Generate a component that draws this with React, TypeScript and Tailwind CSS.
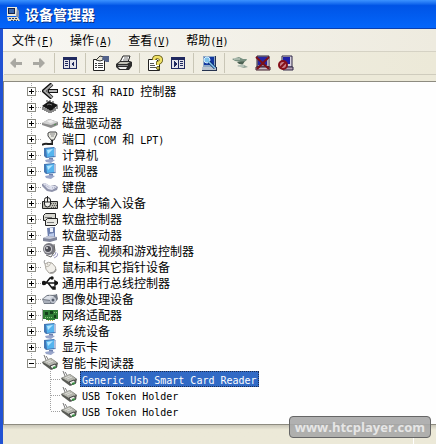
import React, { useState } from 'react';

type IconName =
  | 'scsi' | 'chip' | 'disk' | 'port' | 'computer' | 'keyboard' | 'hid'
  | 'floppyController' | 'floppyDrive' | 'sound' | 'mouse' | 'usb'
  | 'imaging' | 'network' | 'cardReader';

type DeviceNode = {
  label: string;
  icon: IconName;
  children?: string[];
};

const devices: DeviceNode[] = [
  { label: 'SCSI 和 RAID 控制器', icon: 'scsi' },
  { label: '处理器', icon: 'chip' },
  { label: '磁盘驱动器', icon: 'disk' },
  { label: '端口 (COM 和 LPT)', icon: 'port' },
  { label: '计算机', icon: 'computer' },
  { label: '监视器', icon: 'computer' },
  { label: '键盘', icon: 'keyboard' },
  { label: '人体学输入设备', icon: 'hid' },
  { label: '软盘控制器', icon: 'floppyController' },
  { label: '软盘驱动器', icon: 'floppyDrive' },
  { label: '声音、视频和游戏控制器', icon: 'sound' },
  { label: '鼠标和其它指针设备', icon: 'mouse' },
  { label: '通用串行总线控制器', icon: 'usb' },
  { label: '图像处理设备', icon: 'imaging' },
  { label: '网络适配器', icon: 'network' },
  { label: '系统设备', icon: 'computer' },
  { label: '显示卡', icon: 'computer' },
  {
    label: '智能卡阅读器',
    icon: 'cardReader',
    children: ['Generic Usb Smart Card Reader', 'USB Token Holder', 'USB Token Holder'],
  },
];

const menus = [
  { label: '文件', accel: 'F' },
  { label: '操作', accel: 'A' },
  { label: '查看', accel: 'V' },
  { label: '帮助', accel: 'H' },
];

const deviceIcons: Record<IconName, React.ReactNode> = {
  scsi: (
    <g fill="none">
      <path d="M10 1 L2 8 L10 15" stroke="#111" strokeWidth="4" />
      <path d="M6 8 H16" stroke="#111" strokeWidth="4" />
      <path d="M10 1.5 L2.5 8 L10 14.5" stroke="#a8a8a8" strokeWidth="2" />
      <path d="M7 8 H15" stroke="#b5b5b5" strokeWidth="2" />
    </g>
  ),
  chip: (
    <g>
      <path d="M0 7 L7 2 L16 6 L9 12 Z" fill="#161616" />
      <path d="M1 8v3M3 9v3M5 10v3M7 11v3M9 12v2M11 10v3M13 9v3M15 7v3" stroke="#161616" />
      <path d="M5 3V1M8 3V1M11 4V2" stroke="#333" />
      <path d="M5 6 L7 5 L10 6" stroke="#777" fill="none" />
    </g>
  ),
  disk: (
    <g>
      <path d="M0 8 L7 4 L16 7 L16 10 L9 13 L0 10 Z" fill="#8b8b8b" />
      <path d="M0 8 L7 4 L16 7 L9 10 Z" fill="#d2d2d2" />
      <path d="M5 6 L9 5 L12 7 L8 8 Z" fill="#eee" />
      <path d="M12 10 L14 9" stroke="#4d8a4d" />
    </g>
  ),
  port: (
    <g>
      <path d="M6 2 L8 1 L14 1 L15 3 L12 9 L9 9 L6 5 Z" fill="#e6e6de" stroke="#444" />
      <path d="M8 3 H13 M9 5 H12" stroke="#888" />
      <path d="M10 9 V13 H6 Q3 12 0 14" fill="none" stroke="#222" strokeWidth="2" />
      <path d="M9 10 V12" stroke="#bbb" />
    </g>
  ),
  computer: (
    <g>
      <path d="M2 1 L12 0 L14 2 L14 10 L4 11 L2 9 Z" fill="#4377b4" />
      <path d="M4 2 L12 1 L12 9 L5 10 Z" fill="#55b4ee" />
      <path d="M5 3 L11 2 L6 7 Z" fill="#b5e7ff" />
      <path d="M12 1 L14 2 L14 10 L12 9 Z" fill="#b4c1dd" />
      <path d="M7 11 H11 V13 H7 Z" fill="#6f80ad" />
      <path d="M3 13 L8 12 L13 13 L9 16 L4 15 Z" fill="#98a5ca" />
    </g>
  ),
  keyboard: (
    <g>
      <path d="M0 5 L3 4 L8 7 L13 6 L16 8 L15 11 L10 13 L5 12 L0 7 Z" fill="#8f93ab" />
      <path d="M1 5 L3 4 L8 7 L13 7 L15 8 L10 11 L6 10 Z" fill="#dfe1ee" />
      <path d="M3 6 L8 9 M10 9 L14 8" stroke="#a7abc2" strokeDasharray="1 1" />
    </g>
  ),
  hid: (
    <g>
      <path d="M0.500 6.500 H15.500 V13.500 H0.500 Z" fill="#b9b9b0" stroke="#222" />
      <path d="M9 8.500 H15 M10 10.500 H15 M9 12.500 H15" stroke="#555" strokeDasharray="1 1" />
      <path d="M2.500 4.500 Q2.500 2.500 5 2.500 Q8.500 2.500 8.500 5 V9 Q8.500 12 5.500 12 Q2.500 12 2.500 9 Z" fill="#f2f2ee" stroke="#222" />
      <path d="M5.500 1 V7 M3 7 H8" stroke="#222" />
    </g>
  ),
  floppyController: (
    <g stroke="#222">
      <path d="M1.500 4.500 L3.500 2.500 H13.500 V7.500 L11.500 9.500 H1.500 Z" fill="#d6d6cf" />
      <path d="M3.500 9.500 L5.500 7.500 H15.500 V12.500 L13.500 14.500 H3.500 Z" fill="#e8e8e2" />
      <path d="M3 6.500 H10 M5 11.500 H12" stroke="#777" />
    </g>
  ),
  floppyDrive: (
    <g>
      <path d="M5 1 L13 0 V10 L6 11 Z" fill="#6d7fae" />
      <path d="M8 1 L11 1 V5 L8 5 Z" fill="#e9eefb" />
      <path d="M7 7 L12 6 V10 L7 11 Z" fill="#b8c9ea" />
      <path d="M1 11 L6 9 L15 10 L15 13 L8 15 L1 14 Z" fill="#7f8499" />
      <path d="M1 11 L6 9 L15 10 L8 12 Z" fill="#c6cad9" />
    </g>
  ),
  sound: (
    <g>
      <circle cx="7" cy="6" r="6" fill="#77777f" />
      <circle cx="6" cy="6" r="4" fill="#c9c9ce" />
      <circle cx="6" cy="6" r="3" fill="#4b4b54" />
      <circle cx="5" cy="5" r="1" fill="#ddd" />
      <path d="M12 1 L13 8 L9 14 L4 12" fill="none" stroke="#666" />
      <path d="M11 13 Q14 12 14 9 M12 15 Q16 14 16 10" fill="none" stroke="#9a9ac0" />
    </g>
  ),
  mouse: (
    <g>
      <path d="M3 1 Q1 3 3 5" fill="none" stroke="#999" />
      <path d="M3 5 Q6 2 10 4 Q15 8 14 12 Q11 16 7 14 Q3 11 3 5 Z" fill="#f1efea" stroke="#aaa69f" />
      <path d="M3 8 Q8 8 9 4 M6 6 L5 4" fill="none" stroke="#bbb7ae" />
      <path d="M8 14 Q13 14 14 10" fill="none" stroke="#888" />
    </g>
  ),
  usb: (
    <g fill="none" stroke="#161616" strokeWidth="1.500">
      <path d="M1 8 H15 M4 8 L8 3 H10 M6 8 L10 13 H12" />
      <circle cx="2" cy="8" r="1.500" fill="#161616" />
      <path d="M13 6 L16 8 L13 10 Z" fill="#161616" />
      <circle cx="10" cy="3" r="1" fill="#161616" />
      <path d="M11 12 H13 V14 H11 Z" fill="#161616" />
    </g>
  ),
  imaging: (
    <g>
      <path d="M0 8 L5 4 L15 3 L16 8 L12 13 L2 13 Z" fill="#737984" />
      <path d="M1 8 L5 5 L12 5 L9 9 Z" fill="#dde1e8" />
      <path d="M1 9 L8 10 L8 12 L2 12 Z" fill="#aab0bb" />
      <circle cx="11" cy="9" r="3" fill="#c7ccd6" />
      <circle cx="11" cy="9" r="1.500" fill="#565d6b" />
      <path d="M7 4 L14 3" stroke="#eee" />
    </g>
  ),
  network: (
    <g>
      <path d="M1 3 H16 V12 H13 V13 H4 V12 H1 Z" fill="#2f7c35" />
      <path d="M0 2 V14" stroke="#555" />
      <path d="M3 5 H6 V8 H3 Z M8 4 H11 V7 H8 Z M12 8 H14 V11 H12 Z" fill="#123f19" />
      <path d="M3 10.500 H10 M12 5.500 H15" stroke="#8fcf7e" strokeDasharray="1 1" />
      <path d="M6 13.500 H12" stroke="#c6b643" strokeDasharray="1 1" />
    </g>
  ),
  cardReader: (
    <g>
      <path d="M2 0 L4 5 M4 1 L6 4" stroke="#777" />
      <path d="M0 7 L9 3 L16 8 L15 12 L9 15 L1 9 Z" fill="#595b55" />
      <path d="M1 7 L9 3 L15 8 L8 11 Z" fill="#b4b5ad" />
      <path d="M4 7 L9 5 M6 8 L11 6" stroke="#dededa" />
      <path d="M8 11 L13 9 L15 12 L10 14 Z" fill="#f0f0ec" stroke="#444" />
      <path d="M11 13 L14 12" stroke="#3a8b45" strokeWidth="2" />
    </g>
  ),
};

const DeviceIcon = ({ name }: { name: IconName }) => (
  <svg className="h-4 w-4 shrink-0" viewBox="0 0 16 16" aria-hidden="true">
    {deviceIcons[name]}
  </svg>
);

// Latin runs are set in a half-width mono face next to the full-width CJK
const MixedText = ({ text }: { text: string }) => (
  <>
    {text.split(/([\x20-\x7e]+)/).filter(Boolean).map((part, index) =>
      /^[\x20-\x7e]+$/.test(part) ? (
        <span key={index} className="whitespace-pre font-['DejaVu_Sans_Mono',monospace] text-[10px] leading-none">
          {part}
        </span>
      ) : (
        <span key={index}>{part}</span>
      )
    )}
  </>
);

const Branch = ({ box, last }: { box?: '+' | '-'; last?: boolean }) => (
  <svg className="h-4 w-[19px] shrink-0" viewBox="0 0 19 16" shapeRendering="crispEdges" aria-hidden="true">
    <path d={`M8.500 0 V${last ? 8 : 16}`} stroke="#a0a0a0" strokeDasharray="1 1" />
    <path d="M9 8.500 H19" stroke="#a0a0a0" strokeDasharray="1 1" />
    {box && (
      <>
        <rect x="4.500" y="4.500" width="8" height="8" fill="#fff" stroke="#8c8c84" />
        <path d={box === '+' ? 'M6 8.500 H11 M8.500 6 V11' : 'M6 8.500 H11'} stroke="#000" />
      </>
    )}
  </svg>
);

const ToolButton = ({ label, children, disabled }: { label: string; children: React.ReactNode; disabled?: boolean }) => (
  <button type="button" aria-label={label} disabled={disabled} className="flex h-5 w-[23px] items-center justify-center">
    <svg className="h-4 w-4" viewBox="0 0 16 16" aria-hidden="true">
      {children}
    </svg>
  </button>
);

const Separator = () => (
  <div className="flex w-2 justify-center">
    <div className="h-5 w-px bg-[#c9c6b6]" />
  </div>
);

const Toolbar = () => (
  <div className="flex h-[23px] items-center border-b border-[#cfccbd]">
    <ToolButton label="后退" disabled>
      <path d="M2 8 L7 3 L8 4 V7 H14 V10 H8 V12 L7 13 Z" fill="#a9a8a2" />
    </ToolButton>
    <ToolButton label="前进" disabled>
      <path d="M14 8 L9 3 L8 4 V7 H2 V10 H8 V12 L9 13 Z" fill="#a9a8a2" />
    </ToolButton>
    <Separator />
    <ToolButton label="显示树">
      <g shapeRendering="crispEdges">
        <path d="M1 2 H15 V14 H1 Z" fill="#20295f" />
        <path d="M2 5 H7 V13 H2 Z M8 5 H14 V13 H8 Z" fill="#e4e4ea" />
        <path d="M3 6.500 H6 M3 8.500 H6 M3 10.500 H6" stroke="#20295f" />
        <path d="M12 6 V12 L9 9 Z" fill="#20295f" />
      </g>
    </ToolButton>
    <Separator />
    <ToolButton label="属性">
      <path d="M0.500 4.500 H11.500 V15.500 H0.500 Z" fill="#fff" stroke="#222" />
      <path d="M2 8.500 H4 M5 8.500 H10 M2 10.500 H4 M5 10.500 H10 M2 12.500 H4 M5 12.500 H10" stroke="#444" />
      <path d="M3 5 L7 1 L11 2 L10 5 L7 6 Z" fill="#e9e6d4" stroke="#333" />
      <path d="M10 1 H16 V7 H13 L9 4 Z" fill="#53628a" />
    </ToolButton>
    <ToolButton label="打印">
      <path d="M4 7 L7 1 H14 L12 7 Z" fill="#fff" stroke="#222" />
      <path d="M7 5 H12 M8 3 H12" stroke="#777" />
      <path d="M0 9 L4 6 H14 L16 7 V11 L13 15 H3 L0 12 Z" fill="#2c2c2c" />
      <path d="M2 9 L4 7 H14 L11 9 Z" fill="#c2c2b8" />
      <path d="M2 12 H11 L10 14 H4 Z" fill="#eee" />
      <path d="M2 10.500 H12" stroke="#888" />
    </ToolButton>
    <Separator />
    <ToolButton label="帮助">
      <path d="M1.500 4.500 H9.500 L12.500 7.500 V15.500 H1.500 Z" fill="#fff" stroke="#222" />
      <path d="M3 8.500 H7 M3 10.500 H8 M3 12.500 H9" stroke="#555" />
      <path d="M7 5 Q7 2 10 2 Q14 2 14 5 Q14 7 11 8 V10" fill="none" stroke="#5c5310" strokeWidth="4" />
      <path d="M7 5 Q7 2 10 2 Q14 2 14 5 Q14 7 11 8 V10" fill="none" stroke="#f0e165" strokeWidth="2.500" />
      <circle cx="11" cy="13" r="1.500" fill="#f0e165" stroke="#5c5310" />
    </ToolButton>
    <ToolButton label="显示操作窗格">
      <g shapeRendering="crispEdges">
        <path d="M1 2 H15 V14 H1 Z" fill="#20295f" />
        <path d="M2 5 H8 V13 H2 Z M9 5 H14 V13 H9 Z" fill="#e4e4ea" />
        <path d="M10 6.500 H13 M10 8.500 H13 M10 10.500 H13" stroke="#20295f" />
        <path d="M4 6 V12 L7 9 Z" fill="#20295f" />
      </g>
    </ToolButton>
    <Separator />
    <ToolButton label="扫描检测硬件改动">
      <path d="M2 1 H14 V12 H2 Z" fill="#8fa9c4" />
      <path d="M3 2 H13 V10 H3 Z" fill="#1238a0" />
      <path d="M14 1 H15 V12 H14 Z" fill="#25324e" />
      <path d="M1 12 H15 V15 H1 Z" fill="#b9c4cf" />
      <path d="M1 15.500 H16 M15.500 12 V16" stroke="#25324e" />
      <circle cx="6" cy="5" r="3" fill="#7cc0ea" stroke="#d4efff" />
      <path d="M8 7 L14 13" stroke="#0d2c66" strokeWidth="3" />
      <path d="M8 7 L14 13" stroke="#82c8f0" strokeWidth="1.500" />
    </ToolButton>
    <Separator />
    <ToolButton label="更新驱动程序">
      <path d="M0 4 L7 2 L11 4 L15 4 L14 6 L9 7 L3 6 Z" fill="#789080" />
      <path d="M5 7 L13 6 L11 9 L7 9 Z" fill="#4c6253" />
      <path d="M5 11 L10 9 L16 12 L12 13 Z" fill="#94a599" />
      <path d="M2 4 L8 4 M7 11 L12 11" stroke="#d5ddd4" />
    </ToolButton>
    <ToolButton label="卸载">
      <path d="M2 1 H14 V12 H2 Z" fill="#8c84a0" stroke="#2d2440" />
      <path d="M3 2 H12 V10 H3 Z" fill="#2626a4" />
      <path d="M13 2 V11" stroke="#e0d9e2" />
      <path d="M1 12 H15 V15 H1 Z" fill="#cbbcc8" stroke="#3d1b2a" />
      <path d="M1 2 L14 14 M14 2 L2 14" stroke="#7c1018" strokeWidth="2" />
    </ToolButton>
    <ToolButton label="停用">
      <path d="M4 1 H14 V12 H4 Z" fill="#d8d2e0" stroke="#302847" />
      <path d="M5 2 H12 V9 H5 Z" fill="#2020a5" />
      <path d="M5 12 H15 V15 H5 Z" fill="#b3a0b4" stroke="#302847" />
      <circle cx="5" cy="10" r="4" fill="#c8818a" stroke="#86101a" strokeWidth="2" />
      <path d="M2 13 L8 7" stroke="#86101a" strokeWidth="2" />
    </ToolButton>
  </div>
);

const App: React.FC = () => {
  const [expanded, setExpanded] = useState(true);
  const [selected, setSelected] = useState(0);

  return (
    <div className="relative min-h-screen cursor-default bg-[#ece9d8] font-['Noto_Sans_CJK_SC',sans-serif] text-[12px] leading-4 text-black">
      <header className="flex h-[29px] items-center gap-[5px] border-b border-[#0a3fb0] bg-linear-to-b from-[#3c93ff] from-0% via-[#0054e6] via-20% to-[#0466fb] pl-1.5">
        <svg className="h-4 w-[14px]" viewBox="0 0 14 16" aria-hidden="true">
          <path d="M1 1 H11 V10 H1 Z" fill="#ebe9dc" />
          <path d="M2 2 H9 V8 H2 Z" fill="#15224a" />
          <path d="M3 3 H8 V7 H3 Z" fill="#3a66ab" />
          <path d="M11 2 L13 5 V11 H10 Z" fill="#8190ad" />
          <path d="M1 11 H12 L14 15 H2 Z" fill="#dedccd" />
          <path d="M3 12.500 H11 M5 14.500 H12" stroke="#333e59" strokeDasharray="2 1" />
        </svg>
        <h1 className="text-[14px] font-bold leading-5 text-white [text-shadow:1px_1px_#0a2f80]">设备管理器</h1>
      </header>

      <main className="border-l-3 border-[#2152d3]">
        <nav className="flex h-[23px] items-center border-b border-[#d5d2c4] bg-linear-to-r from-[#f8f7f3] to-[#eeebdf] pl-px">
          {menus.map((menu) => (
            <button key={menu.accel} type="button" className="whitespace-nowrap px-2">
              {menu.label}
              <span className="font-['DejaVu_Sans_Mono',monospace] text-[10px] leading-none">
                (<u>{menu.accel}</u>)
              </span>
            </button>
          ))}
        </nav>

        <div className="bg-linear-to-r from-[#f3f1e9] to-[#ece9d8] pl-px">
          <Toolbar />
        </div>

        <div className="mt-1.5 border-y border-l border-[#8d8b80] bg-[#fefefe] pb-[5px] pl-[19px] pt-px">
          <ul>
            {devices.map((device, index) => (
              <li key={device.label}>
                <div className="flex h-4 items-center">
                  <button
                    type="button"
                    aria-label={device.label}
                    aria-expanded={device.children ? expanded : false}
                    onClick={() => device.children && setExpanded(!expanded)}
                  >
                    <Branch
                      box={device.children && expanded ? '-' : '+'}
                      last={index === devices.length - 1}
                    />
                  </button>
                  <DeviceIcon name={device.icon} />
                  <div className="h-4 whitespace-nowrap pl-1">
                    <MixedText text={device.label} />
                  </div>
                </div>
                {device.children && expanded && (
                  <ul className="pl-[19px]">
                    {device.children.map((child, childIndex) => (
                      <li key={childIndex} className="flex h-4 items-center">
                        <Branch last={childIndex === device.children!.length - 1} />
                        <DeviceIcon name={device.icon} />
                        <button
                          type="button"
                          onClick={() => setSelected(childIndex)}
                          className={`ml-[3px] h-4 whitespace-nowrap px-0.5 ${
                            selected === childIndex
                              ? 'bg-[#316ac5] text-white outline-1 -outline-offset-1 outline-dotted outline-[#1b2c50]'
                              : ''
                          }`}
                        >
                          <MixedText text={child} />
                        </button>
                      </li>
                    ))}
                  </ul>
                )}
              </li>
            ))}
          </ul>
        </div>

        <footer className="flex h-[19px] items-end justify-end bg-linear-to-b from-[#c9c6b8] from-0% via-[#ece9d8] via-25% to-[#ece9d8] pr-[22px]">
          <div className="h-3 w-px bg-white" />
        </footer>
      </main>

      <div className="absolute bottom-1.5 right-[5px] flex h-[22px] items-center rounded border border-[#666] bg-[#a9a9a9]/90 px-[5px] font-['Open_Sans',sans-serif] text-[13px] font-bold text-[#e6e6e6]">
        www.htcplayer.com
      </div>
    </div>
  );
};

export default App;
